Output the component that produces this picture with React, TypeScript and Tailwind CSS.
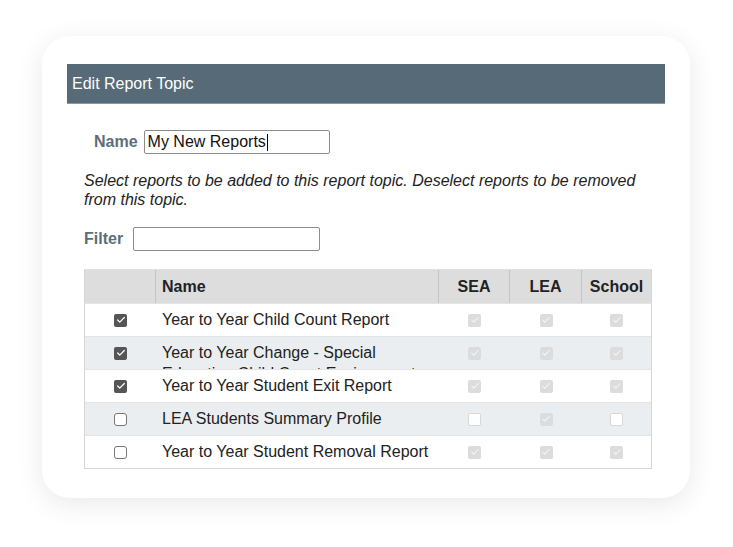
import { Check } from "lucide-react";

type Row = {
  name: string;
  selected: boolean;
  sea: boolean;
  lea: boolean;
  school: boolean;
};

const rows: Row[] = [
  { name: "Year to Year Child Count Report", selected: true, sea: true, lea: true, school: true },
  { name: "Year to Year Change - Special Education Child Count Environment", selected: true, sea: true, lea: true, school: true },
  { name: "Year to Year Student Exit Report", selected: true, sea: true, lea: true, school: true },
  { name: "LEA Students Summary Profile", selected: false, sea: false, lea: true, school: false },
  { name: "Year to Year Student Removal Report", selected: false, sea: true, lea: true, school: true },
];

function Box({ checked, disabled }: { checked: boolean; disabled?: boolean }) {
  if (disabled) {
    return checked ? (
      <span className="flex h-[13px] w-[13px] items-center justify-center rounded-[2px] bg-[#dcdcdc]">
        <Check size={10} strokeWidth={2.5} className="text-[#f6f6f6]" />
      </span>
    ) : (
      <span className="block h-[13px] w-[13px] rounded-[2px] border border-[#d8d8d8] bg-white" />
    );
  }
  return checked ? (
    <span className="flex h-[13px] w-[13px] items-center justify-center rounded-[2px] bg-[#555555]">
      <Check size={10} strokeWidth={3} className="text-white" />
    </span>
  ) : (
    <span className="block h-[13px] w-[13px] rounded-[3px] border border-[#777777] bg-white" />
  );
}

export default function App() {
  return (
    <div className="min-h-screen bg-white pt-[36px] pl-[42px] font-['Liberation_Sans',Arial,sans-serif]">
      <div className="flex h-[462px] w-[648px] flex-col rounded-[28px] bg-white px-[25px] pt-[28px] shadow-[0_6px_28px_rgba(0,0,0,0.09)]">
        <div className="flex h-[40px] items-center border-b border-[#8a9aa3] bg-[#566b77] pl-[5px] text-[16px] text-white">
          Edit Report Topic
        </div>

        <div className="mt-[26px] flex items-center pl-[27px]">
          <span className="text-[16px] font-bold text-[#5b6e79]">Name</span>
          <div className="ml-[6px] flex h-[24px] w-[186px] items-center rounded-[2px] border border-[#8c8c8c] pl-[3px] text-[16px] text-[#111]">
            My New Reports<span className="ml-px h-[17px] w-px bg-black" />
          </div>
        </div>

        <p className="mt-[17px] pl-[17px] pr-[10px] text-[16px] italic leading-[19px] text-[#222]">
          Select reports to be added to this report topic. Deselect reports to be removed from this topic.
        </p>

        <div className="mt-[18px] flex items-center pl-[17px]">
          <span className="text-[16px] font-bold text-[#5b6e79]">Filter</span>
          <div className="ml-[10px] h-[24px] w-[187px] rounded-[2px] border border-[#8c8c8c]" />
        </div>

        <div className="mt-[18px] ml-[17px] w-[568px] border-x border-b border-[#d6d6d6] text-[16px] text-[#222]">
          <div className="flex h-[34px] border-t border-[#e2e2e2] bg-[#dddddd] font-bold">
            <div className="w-[71px] border-r border-[#c4c4c4]" />
            <div className="flex w-[283px] items-center border-r border-[#c4c4c4] pl-[6px]">Name</div>
            <div className="flex w-[71px] items-center justify-center border-r border-[#c4c4c4]">SEA</div>
            <div className="flex w-[72px] items-center justify-center border-r border-[#c4c4c4]">LEA</div>
            <div className="flex flex-1 items-center justify-center">School</div>
          </div>
          {rows.map((r, i) => (
            <div
              key={r.name}
              className={`flex h-[33px] overflow-hidden border-t border-[#e4e4e4] ${i % 2 === 1 ? "bg-[#ebeef0]" : "bg-white"}`}
            >
              <div className="flex w-[71px] items-center justify-center">
                <Box checked={r.selected} />
              </div>
              <div className="w-[283px] pl-[6px] pt-[5px] leading-[21px]">{r.name}</div>
              <div className="flex w-[71px] items-center justify-center">
                <Box checked={r.sea} disabled />
              </div>
              <div className="flex w-[72px] items-center justify-center">
                <Box checked={r.lea} disabled />
              </div>
              <div className="flex flex-1 items-center justify-center">
                <Box checked={r.school} disabled />
              </div>
            </div>
          ))}
        </div>
      </div>
    </div>
  );
}
